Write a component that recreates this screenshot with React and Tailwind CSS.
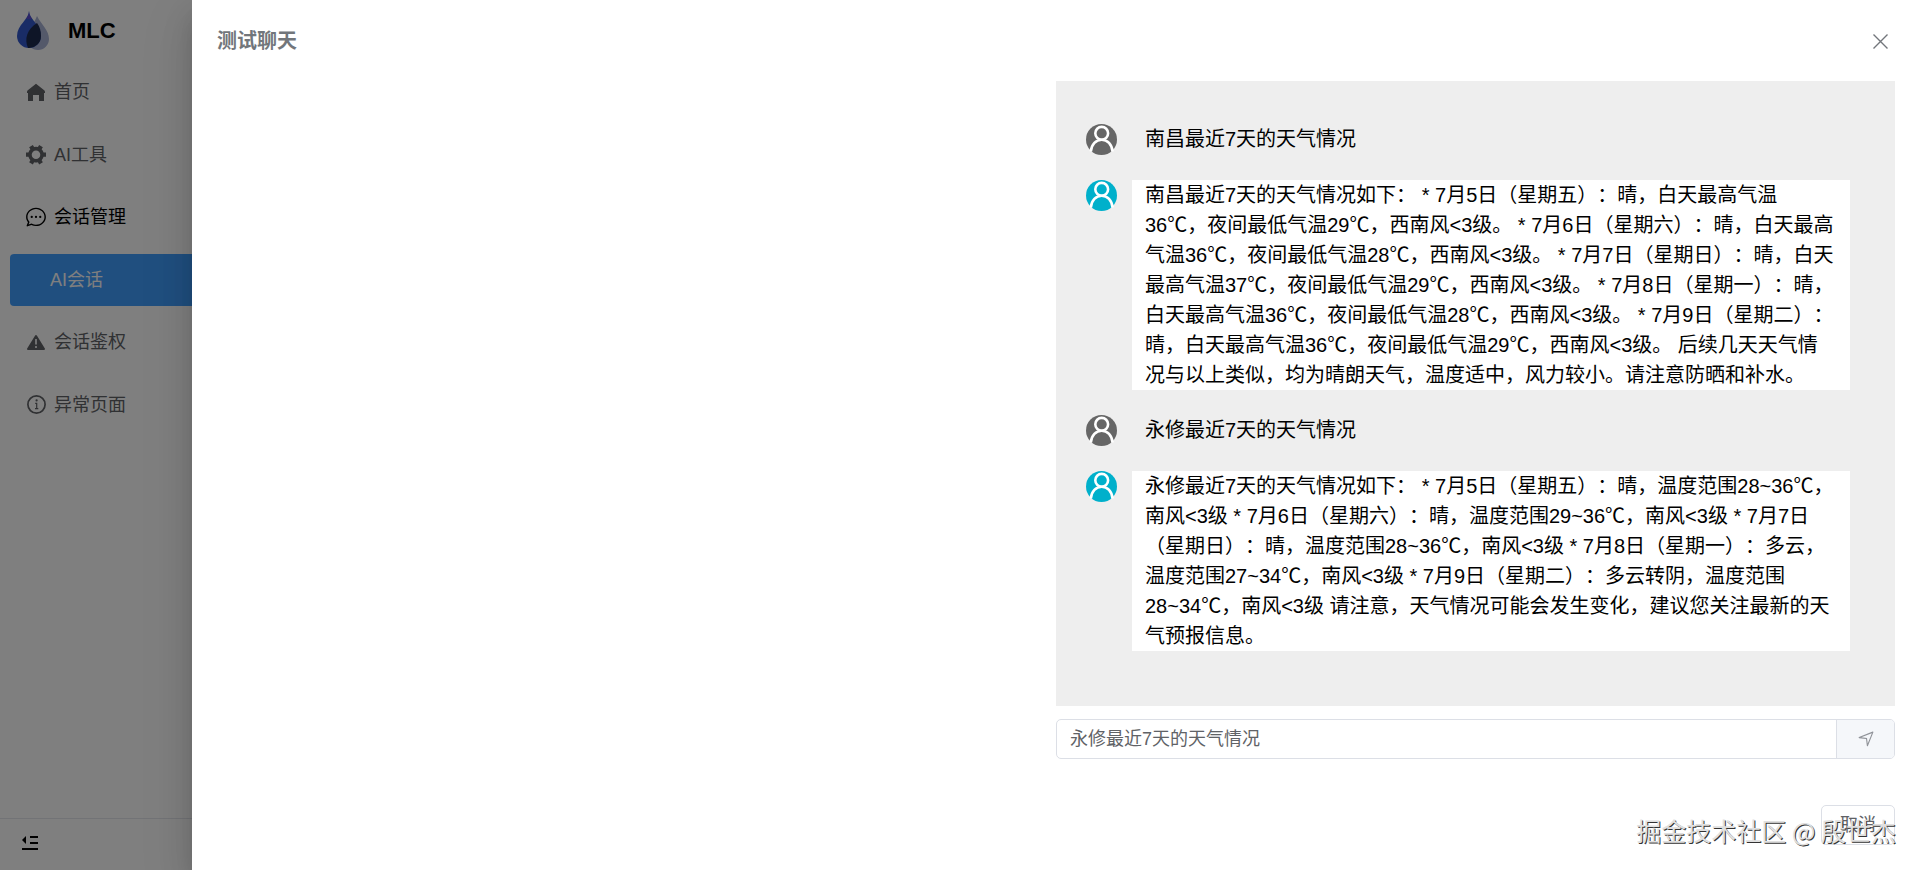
import { useState } from "react";

const MENU = [
    { key: "home", label: "首页", icon: "home" },
    { key: "tools", label: "AI工具", icon: "gear" },
    { key: "chatManage", label: "会话管理", icon: "chat", opened: true },
    { key: "chat", label: "AI会话", active: true },
    { key: "auth", label: "会话鉴权", icon: "warning" },
    { key: "error", label: "异常页面", icon: "info" },
];

const MESSAGES = [
    { id: 1, role: "user", text: "南昌最近7天的天气情况" },
    {
        id: 2,
        role: "bot",
        text: "南昌最近7天的天气情况如下： * 7月5日（星期五）：晴，白天最高气温36℃，夜间最低气温29℃，西南风<3级。 * 7月6日（星期六）：晴，白天最高气温36℃，夜间最低气温28℃，西南风<3级。 * 7月7日（星期日）：晴，白天最高气温37℃，夜间最低气温29℃，西南风<3级。 * 7月8日（星期一）：晴，白天最高气温36℃，夜间最低气温28℃，西南风<3级。 * 7月9日（星期二）：晴，白天最高气温36℃，夜间最低气温29℃，西南风<3级。 后续几天天气情况与以上类似，均为晴朗天气，温度适中，风力较小。请注意防晒和补水。",
    },
    { id: 3, role: "user", text: "永修最近7天的天气情况" },
    {
        id: 4,
        role: "bot",
        text: "永修最近7天的天气情况如下： * 7月5日（星期五）：晴，温度范围28~36℃，南风<3级 * 7月6日（星期六）：晴，温度范围29~36℃，南风<3级 * 7月7日（星期日）：晴，温度范围28~36℃，南风<3级 * 7月8日（星期一）：多云，温度范围27~34℃，南风<3级 * 7月9日（星期二）：多云转阴，温度范围28~34℃，南风<3级 请注意，天气情况可能会发生变化，建议您关注最新的天气预报信息。",
    },
];

function Logo() {
    return (
        <svg width="32" height="40" viewBox="0 0 32 40" aria-hidden="true">
            <path d="M20 5c4 8 12 14 12 23a11 11 0 0 1-22 0C10 19 17 13 20 5z" fill="#a9b2d4" />
            <path d="M12 0c0 8 12 14 12 25a12 12 0 0 1-24 0C0 14 12 8 12 0z" fill="#3358cc" />
            <path d="M12 0c0 3 1 5 3 8h-6c2-3 3-5 3-8z" fill="#5a4ad0" />
            <path d="M20 12c3 4 4 8 4 13a12 12 0 0 1-13 12c-4-9-1-19 9-25z" fill="#1d2b4f" />
        </svg>
    );
}

function MenuIcon({ name }) {
    if (name === "home") {
        return (
            <svg width="18" height="18" viewBox="0 0 18 18" fill="currentColor" aria-hidden="true">
                <path d="M9 .8.8 7.200Q0 8 0 9v1h1v8h5v-6h6v6h5v-8h1V9q0-1-.8-1.800z" />
            </svg>
        );
    }
    if (name === "gear") {
        return (
            <svg width="20" height="20" viewBox="64 64 896 896" fill="currentColor" aria-hidden="true">
                <path d="M764.416 254.72a351.68 351.68 0 0 1 86.336 149.184H960v192.064H850.752a351.68 351.68 0 0 1-86.336 149.312l54.72 94.72-166.272 96-54.592-94.72a352.64 352.64 0 0 1-172.48 0L371.136 936l-166.272-96 54.72-94.72a351.68 351.68 0 0 1-86.336-149.312H64v-192h109.248a351.68 351.68 0 0 1 86.336-149.312L204.8 160l166.208-96h.192l54.656 94.592a352.64 352.64 0 0 1 172.48 0L652.8 64h.128L819.2 160l-54.72 94.72zM704 499.968a192 192 0 1 0-384 0 192 192 0 0 0 384 0z" />
            </svg>
        );
    }
    if (name === "chat") {
        return (
            <svg width="20" height="20" viewBox="60 64 904 904" fill="currentColor" aria-hidden="true">
                <path d="m174.72 855.68 135.296-45.12 23.68 11.84C388.096 849.536 448.576 864 512 864c211.84 0 384-166.784 384-352S723.84 160 512 160 128 326.784 128 512c0 69.12 24.96 139.264 70.848 199.232l22.08 28.8-46.272 115.584zm-45.248 82.56A32 32 0 0 1 89.6 896l58.368-145.92C94.72 680.32 64 596.864 64 512 64 299.904 256 96 512 96s448 203.904 448 416-192 416-448 416a461.056 461.056 0 0 1-206.912-48.384l-175.616 58.56z" />
                <path d="M512 563.2a51.2 51.2 0 1 1 0-102.4 51.2 51.2 0 0 1 0 102.4m192 0a51.2 51.2 0 1 1 0-102.4 51.2 51.2 0 0 1 0 102.4m-384 0a51.2 51.2 0 1 1 0-102.4 51.2 51.2 0 0 1 0 102.4" />
            </svg>
        );
    }
    if (name === "warning") {
        return (
            <svg width="18" height="18" viewBox="0 0 18 18" aria-hidden="true">
                <path d="M9 3 17 16H1z" fill="currentColor" stroke="currentColor" strokeWidth="2" strokeLinejoin="round" />
                <path d="M9 6v5.500M9 13v2" stroke="#fff" strokeWidth="1.600" />
            </svg>
        );
    }
    return (
        <svg width="19" height="19" viewBox="0 0 19 19" fill="none" stroke="currentColor" aria-hidden="true">
            <circle cx="9.500" cy="9.500" r="8.600" strokeWidth="1.700" />
            <path d="M8.200 8.300h1.500v5.200M8 13.600h3.300" strokeWidth="1.200" />
            <circle cx="9.600" cy="5.400" r="1.100" fill="currentColor" stroke="none" />
        </svg>
    );
}

function Sidebar() {
    return (
        <aside className="flex h-full w-[250px] flex-col bg-white">
            <div className="flex h-[61px] items-center gap-[19px] pl-[17px]">
                <Logo />
                <h1 className="text-[22px] font-bold text-black">MLC</h1>
            </div>

            <nav>
                <ul className="grid h-[375px] grid-rows-6 items-center pl-[10px] text-lg">
                    {MENU.map((item) => (
                        <li key={item.key}>
                            <a
                                href={`#${item.key}`}
                                className={
                                    item.active
                                        ? "flex h-[52px] items-center rounded bg-[#409eff] pl-10 text-white"
                                        : item.opened
                                          ? "flex h-[52px] items-center gap-2 pl-4 text-black"
                                          : "flex h-[52px] items-center gap-2 pl-4 text-[#606266]"
                                }
                            >
                                {item.icon && (
                                    <span className="flex w-5 justify-center">
                                        <MenuIcon name={item.icon} />
                                    </span>
                                )}
                                {item.label}
                            </a>
                        </li>
                    ))}
                </ul>
            </nav>

            {/* Collapse */}
            <div className="mt-auto flex h-[52px] items-center border-t border-[#e4e7ed] pb-1 pl-[22px]">
                <button type="button" aria-label="收起菜单">
                    <svg width="16" height="14" viewBox="0 0 16 14" fill="#000" aria-hidden="true">
                        <path d="M4 0v8L0 4zM8 0h8v2H8zM8 6h8v2H8zM0 12h16v2H0z" />
                    </svg>
                </button>
            </div>
        </aside>
    );
}

function Avatar({ bot }) {
    return (
        <svg
            width="31"
            height="31"
            viewBox="0 0 31 31"
            className={bot ? "shrink-0 text-[#00b0cb]" : "shrink-0 text-[#666666]"}
            aria-hidden="true"
        >
            <circle cx="15.500" cy="15.500" r="15.500" fill="currentColor" />
            <g fill="none" stroke="#fff" strokeWidth="2.600">
                <circle cx="15.700" cy="9.300" r="6.400" />
                <path d="M4.800 27.500c.7-7 5.200-11.800 10.900-11.800S25.900 20.500 26.600 27.500" />
            </g>
        </svg>
    );
}

function Message({ role, text }) {
    const bot = role === "bot";
    return (
        <li className="flex items-start gap-[15px]">
            <Avatar bot={bot} />
            <p className={bot ? "flex-1 bg-white px-[13px]" : "flex-1 px-[13px]"}>{text}</p>
        </li>
    );
}

export default function App() {
    const [question, setQuestion] = useState("永修最近7天的天气情况");

    return (
        <div className="relative h-screen overflow-hidden bg-white font-['Liberation_Sans','Noto_Sans_CJK_SC',sans-serif] [text-spacing-trim:space-all]">
            <Sidebar />

            {/* Mask + drawer */}
            <div className="absolute inset-0 flex justify-end bg-black/50">
                <section
                    role="dialog"
                    aria-label="测试聊天"
                    className="flex w-9/10 flex-col bg-white p-[25px] shadow-[0_20px_50px_6px_rgba(0,0,0,0.08),0_15px_30px_rgba(0,0,0,0.12),0_10px_20px_-10px_rgba(0,0,0,0.16)]"
                >
                    <header className="mb-6 flex h-8 items-center justify-between text-[#72767b]">
                        <h2 className="text-xl font-bold">测试聊天</h2>
                        <button type="button" aria-label="关闭" className="p-[7px]">
                            <svg width="15" height="15" viewBox="0 0 15 15" stroke="currentColor" strokeWidth="1.400" aria-hidden="true">
                                <path d="M.5.5l14 14M14.500.5l-14 14" />
                            </svg>
                        </button>
                    </header>

                    <div className="ml-auto w-1/2">
                        <ul className="flex h-[625px] flex-col gap-[25px] overflow-y-auto bg-[#eeeeee] pt-[43px] pr-[45px] pl-[30px] text-xl leading-[30px] text-black">
                            {MESSAGES.map((m) => (
                                <Message key={m.id} role={m.role} text={m.text} />
                            ))}
                        </ul>

                        <form
                            onSubmit={(e) => e.preventDefault()}
                            className="mt-[13px] flex h-10 overflow-hidden rounded-[5px] border border-[#dcdfe6]"
                        >
                            <input
                                type="text"
                                aria-label="问题"
                                value={question}
                                onChange={(e) => setQuestion(e.target.value)}
                                className="min-w-0 flex-1 px-[13px] text-lg text-[#606266] outline-none"
                            />
                            <button
                                type="submit"
                                aria-label="发送"
                                className="flex w-[58px] items-center justify-center border-l border-[#dcdfe6] bg-[#f5f7fa] text-[#909399]"
                            >
                                <svg width="18" height="18" viewBox="0 0 1024 1024" fill="currentColor" aria-hidden="true">
                                    <path d="m249.600 417.088 319.744 43.072 39.168 310.272L845.120 178.880 249.600 417.088zm-129.024 47.168a32 32 0 0 1-7.680-61.440l777.792-311.040a32 32 0 0 1 41.600 41.600l-310.336 775.680a32 32 0 0 1-61.440-7.808L512 516.992l-391.424-52.736z" />
                                </svg>
                            </button>
                        </form>
                    </div>

                    <footer className="mt-auto flex justify-end">
                        <button
                            type="button"
                            className="h-10 rounded-[5px] border border-[#dcdfe6] bg-white px-[18px] text-lg leading-none text-[#606266]"
                        >
                            取消
                        </button>
                    </footer>
                </section>
            </div>

            {/* Watermark */}
            <div className="pointer-events-none absolute right-6 bottom-[22px] font-['Noto_Sans_CJK_SC',sans-serif] text-[25px] leading-9 text-[#e0e0e0] [text-shadow:1px_1px_0_#333]">
                掘金技术社区 @ 殷世杰
            </div>
        </div>
    );
}
